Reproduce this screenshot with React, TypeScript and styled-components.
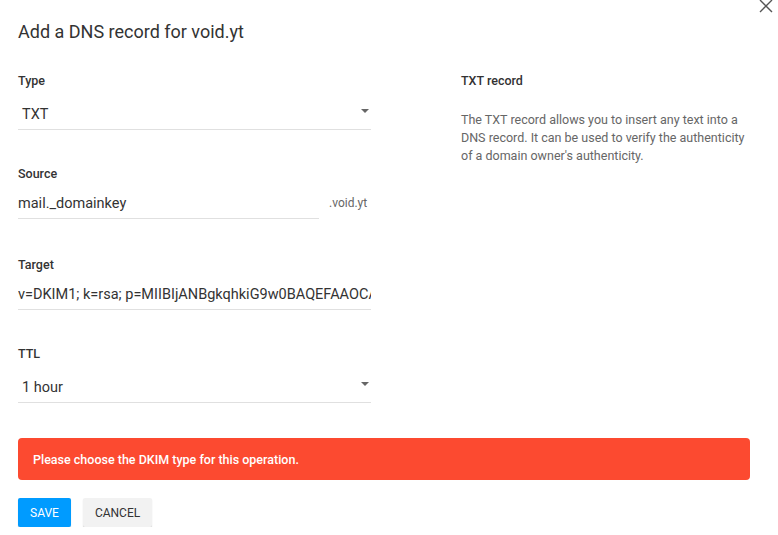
import styled, { createGlobalStyle } from 'styled-components'

const GlobalStyle = createGlobalStyle`
  html, body {
    margin: 0;
    padding: 0;
    background: #fff;
  }
  body {
    font-family: Roboto, "Liberation Sans", Arial, sans-serif;
    color: #333;
  }
`

export default function App() {
  return (
    <>
      <GlobalStyle />
      <Dialog>
        <CloseButton aria-label="close">
          <svg width="14" height="14" viewBox="0 0 14 14">
            <path d="M1 1 L13 13 M13 1 L1 13" stroke="#555" strokeWidth="1.4" fill="none" />
          </svg>
        </CloseButton>
        <Title>Add a DNS record for void.yt</Title>
        <Body>
          <FormColumn>
            <Field>
              <Label>Type</Label>
              <Select>
                <span>TXT</span>
                <Caret />
              </Select>
            </Field>
            <Field>
              <Label>Source</Label>
              <InputRow>
                <Input $width={301}>mail._domainkey</Input>
                <Suffix>.void.yt</Suffix>
              </InputRow>
            </Field>
            <Field $extra={2}>
              <Label>Target</Label>
              <Input>v=DKIM1; k=rsa; p=MIIBIjANBgkqhkiG9w0BAQEFAAOCAQ8AMIIBCgKCAQEA</Input>
            </Field>
            <Field>
              <Label>TTL</Label>
              <Select>
                <span>1 hour</span>
                <Caret />
              </Select>
            </Field>
          </FormColumn>
          <Help>
            <HelpTitle>TXT record</HelpTitle>
            <HelpText>
              The TXT record allows you to insert any text into a DNS record. It can be used to
              verify the authenticity of a domain owner's authenticity.
            </HelpText>
          </Help>
        </Body>
        <Alert>Please choose the DKIM type for this operation.</Alert>
        <Actions>
          <Button $primary>SAVE</Button>
          <Button>CANCEL</Button>
        </Actions>
      </Dialog>
    </>
  )
}

const Dialog = styled.div`
  position: relative;
  width: 778px;
  box-sizing: border-box;
  padding: 20px 28px 0 18px;
`

const CloseButton = styled.button`
  position: absolute;
  top: -2px;
  right: 4px;
  width: 16px;
  height: 16px;
  padding: 0;
  border: none;
  background: none;
  display: flex;
  align-items: center;
  justify-content: center;
`

const Title = styled.h1`
  margin: 0;
  font-size: 18px;
  line-height: 24px;
  font-weight: 400;
  color: #333;
`

const Body = styled.div`
  display: grid;
  grid-template-columns: 353px 1fr;
  column-gap: 90px;
  margin-top: 29px;
`

const FormColumn = styled.div`
  display: flex;
  flex-direction: column;
  gap: 36px;
`

const Field = styled.div<{ $extra?: number }>`
  display: flex;
  flex-direction: column;
  margin-top: ${(p) => p.$extra || 0}px;
`

const Label = styled.label`
  font-size: 12.5px;
  line-height: 16px;
  height: 16px;
  font-weight: 500;
  color: #333;
`

const Select = styled.div`
  margin-top: 8px;
  height: 33px;
  box-sizing: border-box;
  padding: 3px 2px 0 4px;
  display: flex;
  align-items: center;
  justify-content: space-between;
  border-bottom: 1px solid #e0e0e0;
  font-size: 14.5px;
  color: #333;
`

const Caret = styled.span`
  width: 0;
  height: 0;
  margin-top: -8px;
  border-left: 4px solid transparent;
  border-right: 4px solid transparent;
  border-top: 4px solid #666;
`

const InputRow = styled.div`
  display: flex;
  align-items: flex-end;
  gap: 10px;
`

const Input = styled.div<{ $width?: number }>`
  margin-top: 7px;
  height: 29px;
  width: ${(p) => (p.$width ? `${p.$width}px` : 'auto')};
  display: flex;
  align-items: center;
  overflow: hidden;
  white-space: nowrap;
  border-bottom: 1px solid #e0e0e0;
  font-size: 14.5px;
  color: #333;
`

const Suffix = styled.span`
  font-size: 12px;
  line-height: 29px;
  height: 30px;
  color: #666;
`

const Help = styled.div`
  display: flex;
  flex-direction: column;
`

const HelpTitle = styled.h2`
  margin: 0;
  font-size: 12.5px;
  line-height: 16px;
  font-weight: 500;
  color: #333;
`

const HelpText = styled.p`
  margin: 22px 0 0;
  font-size: 12.5px;
  line-height: 18px;
  color: #666;
`

const Alert = styled.div`
  margin-top: 35px;
  height: 42px;
  padding: 0 15px;
  display: flex;
  align-items: center;
  background: #fc4a30;
  border-radius: 4px;
  color: #fff;
  font-size: 12.5px;
  font-weight: 500;
`

const Actions = styled.div`
  display: flex;
  gap: 12px;
  margin-top: 18px;
`

const Button = styled.button<{ $primary?: boolean }>`
  height: 29px;
  padding: 0 12px;
  border: none;
  border-radius: 2px;
  font-family: Roboto, "Liberation Sans", Arial, sans-serif;
  font-size: 12px;
  background: ${(p) => (p.$primary ? '#009bff' : '#f2f2f2')};
  color: ${(p) => (p.$primary ? '#fff' : '#333')};
  box-shadow: 0 1px 1px rgba(0, 0, 0, 0.2);
  cursor: pointer;
`
